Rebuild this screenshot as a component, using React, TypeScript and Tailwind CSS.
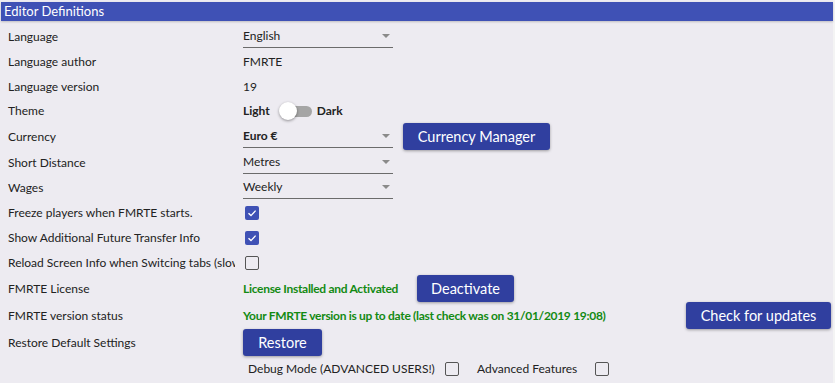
import { ReactNode } from 'react'

const font = { fontFamily: 'Lato, "Noto Sans", sans-serif' }

const Row = ({ label, h = 'h-[25px]', children }: { label: string; h?: string; children?: ReactNode }) => (
  <div className={`flex items-center ${h}`}>
    <div className="w-[235px] shrink-0 overflow-hidden whitespace-nowrap pl-[8px] text-[12px] text-[#222]">{label}</div>
    <div className="flex flex-1 items-center pl-[8px] text-[12px] text-[#222]">{children}</div>
  </div>
)

const Select = ({ value, bold }: { value: string; bold?: boolean }) => (
  <div className="relative flex h-[22px] w-[150px] items-center border-b border-[#6b6b6b]">
    <span className={bold ? 'font-bold' : ''}>{value}</span>
    <span className="absolute right-[3px] top-[8px] h-0 w-0 border-x-[4px] border-t-[4px] border-x-transparent border-t-[#8a8a8a]" />
  </div>
)

const Check = ({ checked }: { checked?: boolean }) =>
  checked ? (
    <div className="ml-[2px] flex h-[14px] w-[14px] items-center justify-center rounded-[2px] bg-[#3f51b5]">
      <svg width="10" height="10" viewBox="0 0 10 10">
        <path d="M1.5 5.2 L4 7.6 L8.6 2.6" stroke="white" strokeWidth="1.4" fill="none" />
      </svg>
    </div>
  ) : (
    <div className="ml-[2px] h-[14px] w-[14px] rounded-[2px] border-[1.5px] border-[#555]" />
  )

const Btn = ({ children, w }: { children: ReactNode; w: string }) => (
  <button className={`flex h-[27px] ${w} items-center justify-center rounded-[3px] bg-[#303f9f] text-[14.5px] text-white shadow-[0_1px_3px_rgba(0,0,0,0.35)]`}>
    {children}
  </button>
)

export default function App() {
  return (
    <div className="h-[383px] w-[835px] bg-[#f4f4f4]" style={font}>
      <div className="h-[383px] w-[833px] bg-[#edebf1] pt-[2px]">
        <div className="ml-[1px] flex h-[19px] items-center bg-[#3f51b5] pl-[3px] text-[13px] text-white shadow-[0_1px_2px_rgba(0,0,0,0.2)]">
          Editor Definitions
        </div>
        <div className="pt-[3px]">
          <Row label="Language"><Select value="English" /></Row>
          <Row label="Language author">FMRTE</Row>
          <Row label="Language version">19</Row>
          <Row label="Theme" h="h-[24px]">
            <span className="font-bold">Light</span>
            <div className="relative ml-[9px] h-[18px] w-[33px]">
              <div className="absolute left-[9px] top-[4px] h-[11px] w-[24px] rounded-full bg-[#a5a5a5]" />
              <div className="absolute left-0 top-0 h-[18px] w-[18px] rounded-full bg-white shadow-[0_1px_3px_rgba(0,0,0,0.4)]" />
            </div>
            <span className="ml-[5px] font-bold">Dark</span>
          </Row>
          <Row label="Currency" h="h-[27px]">
            <Select value="Euro €" bold />
            <div className="ml-[10px]"><Btn w="w-[147px]">Currency Manager</Btn></div>
          </Row>
          <Row label="Short Distance"><Select value="Metres" /></Row>
          <Row label="Wages"><Select value="Weekly" /></Row>
          <Row label="Freeze players when FMRTE starts."><Check checked /></Row>
          <Row label="Show Additional Future Transfer Info"><Check checked /></Row>
          <Row label="Reload Screen Info when Switcing tabs (slow)"><Check /></Row>
          <Row label="FMRTE License" h="h-[27px]">
            <span className="w-[160px] whitespace-nowrap font-bold tracking-[-0.3px] text-[#138a13]">License Installed and Activated</span>
            <div className="ml-[14px]"><Btn w="w-[97px]">Deactivate</Btn></div>
          </Row>
          <Row label="FMRTE version status" h="h-[27px]">
            <span className="whitespace-nowrap font-bold tracking-[-0.3px] text-[#138a13]">Your FMRTE version is up to date (last check was on 31/01/2019 19:08)</span>
            <div className="ml-auto mr-[2px]"><Btn w="w-[145px]">Check for updates</Btn></div>
          </Row>
          <Row label="Restore Default Settings" h="h-[27px]">
            <Btn w="w-[79px]">Restore</Btn>
          </Row>
          <div className="flex h-[26px] items-center pl-[248px] text-[12px] text-[#222]">
            <span className="w-[180px] whitespace-nowrap">Debug Mode (ADVANCED USERS!)</span>
            <div className="ml-[15px]"><Check /></div>
            <span className="ml-[18px] w-[100px] whitespace-nowrap">Advanced Features</span>
            <div className="ml-[16px]"><Check /></div>
          </div>
        </div>
      </div>
    </div>
  )
}
